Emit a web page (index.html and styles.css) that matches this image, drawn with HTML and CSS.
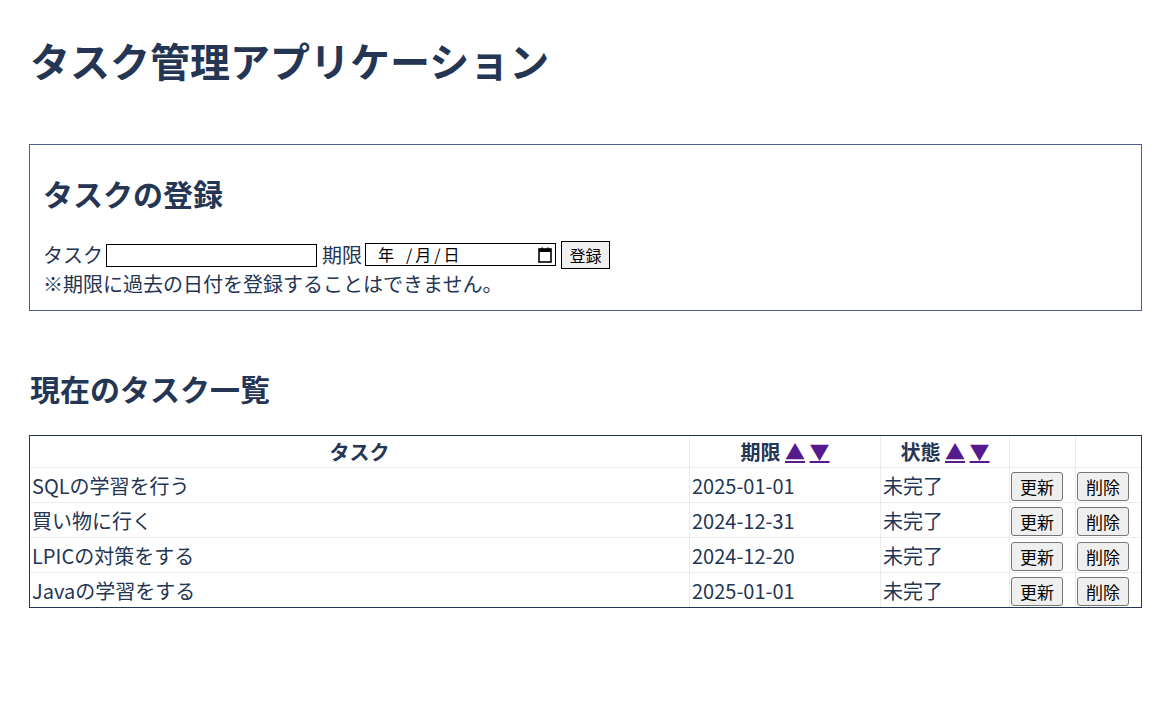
FILE: index.html
```html
<!DOCTYPE html>
<html lang="ja">
<head>
<meta charset="utf-8">
<title>タスク管理アプリケーション</title>
<link rel="stylesheet" href="styles.css">
</head>
<body>
<h1 class="title">タスク管理アプリケーション</h1>

<section class="register">
  <h2 class="heading">タスクの登録</h2>
  <div class="form-row">
    <span class="label">タスク</span>
    <input class="text-input" type="text">
    <span class="label label-gap">期限</span>
    <span class="date-input">
      <span class="date-text"><span class="date-part">年</span><span class="date-sep">/</span><span class="date-part">月</span><span class="date-sep">/</span><span class="date-part">日</span></span>
      <svg class="cal-icon" width="14" height="16" viewBox="0 0 14 16">
        <rect x="1" y="2" width="12" height="13" fill="none" stroke="#000" stroke-width="1.6"/>
        <rect x="1" y="2" width="12" height="3" fill="#000"/>
        <rect x="3.5" y="0.5" width="1.5" height="2.5" fill="#000"/>
        <rect x="9" y="0.5" width="1.5" height="2.5" fill="#000"/>
      </svg>
    </span>
    <button class="submit-btn" type="button">登録</button>
  </div>
  <p class="note">※期限に過去の日付を登録することはできません。</p>
</section>

<h2 class="heading list-heading">現在のタスク一覧</h2>

<table class="task-table">
  <thead>
    <tr>
      <th class="col-task">タスク</th>
      <th class="col-date">期限 <a class="sort" href="#">▲</a> <a class="sort" href="#">▼</a></th>
      <th class="col-status">状態 <a class="sort" href="#">▲</a> <a class="sort" href="#">▼</a></th>
      <th class="col-btn"></th>
      <th class="col-btn col-last"></th>
    </tr>
  </thead>
  <tbody>
    <tr>
      <td>SQLの学習を行う</td><td>2025-01-01</td><td>未完了</td>
      <td><button class="row-btn" type="button">更新</button></td>
      <td><button class="row-btn" type="button">削除</button></td>
    </tr>
    <tr>
      <td>買い物に行く</td><td>2024-12-31</td><td>未完了</td>
      <td><button class="row-btn" type="button">更新</button></td>
      <td><button class="row-btn" type="button">削除</button></td>
    </tr>
    <tr>
      <td>LPICの対策をする</td><td>2024-12-20</td><td>未完了</td>
      <td><button class="row-btn" type="button">更新</button></td>
      <td><button class="row-btn" type="button">削除</button></td>
    </tr>
    <tr>
      <td>Javaの学習をする</td><td>2025-01-01</td><td>未完了</td>
      <td><button class="row-btn" type="button">更新</button></td>
      <td><button class="row-btn" type="button">削除</button></td>
    </tr>
  </tbody>
</table>
</body>
</html>
```

FILE: styles.css
```css
html, body {
  background: #ffffff;
}
body {
  margin: 0;
  padding: 0 30px 0 29px;
  font-family: "Noto Sans CJK JP", "Noto Sans", sans-serif;
  font-size: 20px;
  color: #253554;
}
.title {
  font-size: 40px;
  font-weight: 700;
  margin: 31px 0 0 1px;
  line-height: 58px;
}
.register {
  margin-top: 55px;
  border: 1px solid #4a6090;
  padding: 2px 13px 12px;
}
.heading {
  font-size: 30px;
  font-weight: 700;
  margin: 25px 0;
  line-height: 43px;
}
.list-heading {
  margin: 56px 0 25px 1px;
}
.form-row {
  display: flex;
  align-items: center;
  height: 29px;
}
.label {
  line-height: 29px;
}
.label-gap {
  margin-left: 5px;
}
.text-input {
  box-sizing: border-box;
  width: 211px;
  height: 23px;
  margin: 1px 0 0 3px;
  border: 1px solid #000;
  border-radius: 0;
  padding: 0 2px;
  font-family: inherit;
  font-size: 16px;
  background: #fff;
}
.date-input {
  box-sizing: border-box;
  width: 191px;
  height: 23px;
  margin-left: 3px;
  border: 1px solid #000;
  display: flex;
  align-items: center;
  justify-content: space-between;
  padding: 0 3px 0 12px;
  background: #fff;
  color: #000;
}
.date-text {
  display: flex;
  align-items: center;
  font-size: 16px;
  line-height: 21px;
}
.date-sep {
  margin: 0 3px;
}
.date-part:first-child {
  margin-right: 9px;
}
.cal-icon {
  display: block;
}
.submit-btn {
  box-sizing: border-box;
  width: 49px;
  height: 28px;
  margin-left: 5px;
  border: 1px solid #000;
  border-radius: 0;
  background: #f0f0f0;
  font-family: inherit;
  font-size: 16px;
  color: #000;
  padding: 0;
}
.note {
  margin: 0;
  line-height: 29px;
}
.task-table {
  width: 100%;
  table-layout: fixed;
  border-collapse: separate;
  border-spacing: 0;
  border: 1px solid #253554;
}
.task-table th,
.task-table td {
  box-sizing: border-box;
  border-right: 1px solid #ebebeb;
  border-bottom: 1px solid #ebebeb;
  padding: 1px;
  line-height: 29px;
}
.task-table th:last-child,
.task-table td:last-child {
  border-right: none;
}
.task-table tbody tr:last-child td {
  border-bottom: none;
}
.task-table th {
  font-weight: 700;
  text-align: center;
  height: 31px;
}
.task-table td {
  text-align: left;
  height: 35px;
}
.task-table tbody tr:last-child td {
  height: 33px;
}
.col-task { width: 660px; }
.col-date { width: 191px; }
.col-status { width: 129px; }
.col-btn { width: 66px; }
.col-last { width: 65px; }
.task-table td:first-child,
.task-table td:nth-child(2),
.task-table td:nth-child(3) {
  padding-left: 2px;
}
.sort {
  color: #551a8b;
  text-decoration: underline;
}
.row-btn {
  box-sizing: border-box;
  width: 52px;
  height: 29px;
  vertical-align: middle;
  border: 1px solid #767676;
  border-radius: 3px;
  background: #efefef;
  font-family: inherit;
  font-size: 17px;
  color: #000;
  padding: 0;
}
```
